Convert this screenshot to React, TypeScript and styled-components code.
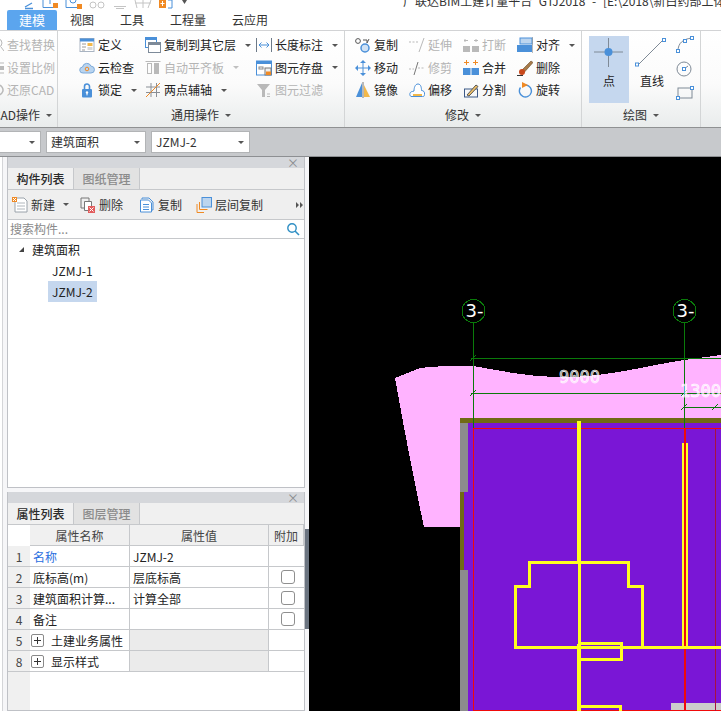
import React from "react";
import styled, { createGlobalStyle } from "styled-components";

const GlobalStyle = createGlobalStyle`
  html, body {
    margin: 0;
    padding: 0;
    background: #fff;
  }
  body {
    font-family: "Noto Sans CJK SC", "Noto Sans", sans-serif;
    font-size: 12px;
    color: #222;
  }
`;

const Page = styled.div`
  width: 721px;
  height: 711px;
  overflow: hidden;
  display: flex;
  flex-direction: column;
  line-height: 16px;
`;

/* ---------- title strip + tabs ---------- */

const TitleStrip = styled.div`
  height: 10px;
  flex: none;
  overflow: hidden;
  display: flex;
  justify-content: space-between;
  background: #fff;
`;

const TitleText = styled.div`
  margin-top: -7px;
  width: 318px;
  white-space: nowrap;
  overflow: hidden;
  color: #333;
  word-spacing: 4px;
`;

const TabBar = styled.div`
  height: 20px;
  flex: none;
  display: flex;
  padding-left: 7px;
  border-bottom: 1px solid #d2d3d5;
  background: #fff;
`;

const MenuTab = styled.div<{ $active?: boolean; $w: number }>`
  width: ${(p) => p.$w}px;
  height: 20px;
  line-height: 20px;
  text-align: center;
  font-size: ${(p) => (p.$active ? "13px" : "12px")};
  color: ${(p) => (p.$active ? "#fff" : "#333")};
  background: ${(p) => (p.$active ? "#5ba5ee" : "transparent")};
  border-radius: 2px 2px 0 0;
`;

/* ---------- ribbon ---------- */

const Ribbon = styled.div`
  height: 96px;
  flex: none;
  display: flex;
  background: linear-gradient(#ffffff 0%, #fbfbfb 55%, #e9ecec 100%);
  border-bottom: 1px solid #8f9192;
  overflow: hidden;
`;

const RibbonGroup = styled.div<{ $w: number; $bleed?: number; $pad?: number }>`
  width: ${(p) => p.$w}px;
  flex: none;
  display: flex;
  flex-direction: column;
  margin-left: ${(p) => p.$bleed ?? 0}px;
  padding-left: ${(p) => p.$pad ?? 0}px;
  padding-top: 3px;
  box-sizing: border-box;
  border-right: 1px solid #d3d5d6;
`;

const GroupBody = styled.div`
  height: 68px;
  display: flex;
`;

const ToolColumn = styled.div<{ $w: number }>`
  width: ${(p) => p.$w}px;
  flex: none;
  display: flex;
  flex-direction: column;
`;

const Tool = styled.div<{ $off?: boolean }>`
  height: 22.5px;
  display: flex;
  align-items: center;
  gap: 3px;
  white-space: nowrap;
  color: ${(p) => (p.$off ? "#b4b4b4" : "#222")};
`;

const Caret = styled.i<{ $off?: boolean; $gap?: number }>`
  display: inline-block;
  width: 0;
  height: 0;
  margin-left: ${(p) => p.$gap ?? 6}px;
  border-left: 3px solid transparent;
  border-right: 3px solid transparent;
  border-top: 3px solid ${(p) => (p.$off ? "#c0c0c0" : "#555")};
`;

const GroupLabel = styled.div<{ $shift?: number }>`
  height: 24px;
  margin-top: 1px;
  margin-left: ${(p) => -(p.$shift ?? 0)}px;
  display: flex;
  align-items: center;
  justify-content: center;
  color: #333;
`;

const DrawTile = styled.div<{ $on?: boolean }>`
  width: 40px;
  height: 67px;
  margin-top: 2px;
  margin-left: ${(p) => (p.$on ? 0 : 3)}px;
  display: flex;
  flex-direction: column;
  align-items: center;
  background: ${(p) => (p.$on ? "#c5d7ee" : "transparent")};
`;

const TileLabel = styled.span`
  margin-top: 1px;
`;

const ShapeColumn = styled.div`
  width: 20px;
  margin-left: 3px;
  display: flex;
  flex-direction: column;
  gap: 6px;
  padding-top: 2px;
`;

/* ---------- selector bar ---------- */

const SelectorBar = styled.div`
  height: 25px;
  flex: none;
  display: flex;
  gap: 5px;
  padding-top: 3px;
  margin-left: -1px;
  background: #c7c9cc;
  border-bottom: 1px solid #8d8f92;
`;

const Select = styled.div<{ $w: number }>`
  width: ${(p) => p.$w}px;
  height: 22px;
  box-sizing: border-box;
  padding: 0 5px 0 4px;
  display: flex;
  align-items: center;
  justify-content: space-between;
  background: #fff;
  border: 1px solid #b2b4b6;
  color: #333;
`;

/* ---------- work area ---------- */

const WorkArea = styled.div`
  flex: 1;
  min-height: 0;
  display: flex;
`;

const Dock = styled.div`
  width: 307px;
  flex: none;
  box-sizing: border-box;
  margin-left: 2px;
  padding-left: 4px;
  border-left: 1px solid #d4d5d8;
  display: flex;
  flex-direction: column;
  gap: 4px;
  background: #f6f6f8;
  position: relative;
`;

const Panel = styled.div<{ $h?: number }>`
  width: 298px;
  box-sizing: border-box;
  border: 1px solid #bfc1c6;
  border-top: none;
  background: #fff;
  display: flex;
  flex-direction: column;
  ${(p) => (p.$h ? `height: ${p.$h}px; flex: none;` : "flex: 1; min-height: 0;")}
`;

const PanelHead = styled.div`
  height: 11px;
  flex: none;
  display: flex;
  justify-content: flex-end;
  align-items: center;
  padding-right: 5px;
  background: #d5d7db;
  color: #8a8c90;
`;

const PanelTabs = styled.div`
  height: 21px;
  flex: none;
  display: flex;
  background: #f0f0f0;
  border-bottom: 1px solid #c6c8cb;
`;

const PanelTab = styled.div<{ $on?: boolean }>`
  width: 65px;
  text-align: center;
  line-height: 22px;
  font-weight: 500;
  border-right: 1px solid #c6c8cb;
  color: ${(p) => (p.$on ? "#2a2a2a" : "#8b8b8b")};
  background: ${(p) => (p.$on ? "#f0f0f0" : "#e2e2e2")};
`;

const ListTools = styled.div`
  height: 29px;
  flex: none;
  display: flex;
  align-items: center;
  padding-left: 4px;
  background: #efefef;
  border-bottom: 1px solid #c6c8cb;
  color: #333;
  white-space: nowrap;
`;

const ListTool = styled.div<{ $w: number }>`
  width: ${(p) => p.$w}px;
  flex: none;
  display: flex;
  align-items: center;
  gap: 3px;
`;

const MoreArrows = styled.svg`
  margin-left: 33px;
  flex: none;
`;

const SearchRow = styled.div`
  height: 18px;
  flex: none;
  display: flex;
  align-items: center;
  justify-content: space-between;
  padding: 0 4px 0 2px;
  border-bottom: 1px solid #c6c8cb;
  color: #8a8a8a;
`;

const Tree = styled.div`
  flex: 1;
  display: flex;
  flex-direction: column;
  color: #222;
`;

const TreeRow = styled.div<{ $depth: number }>`
  height: 21px;
  display: flex;
  align-items: center;
  padding-left: ${(p) => (p.$depth ? 40 : 11)}px;
  gap: 8px;
`;

const TreeLabel = styled.span<{ $on?: boolean; $flush?: boolean }>`
  padding: ${(p) => (p.$flush ? "0" : "0 4px")};
  line-height: 21px;
  background: ${(p) => (p.$on ? "#c5d7ee" : "transparent")};
`;

const Twist = styled.i`
  width: 0;
  height: 0;
  border-bottom: 5px solid #444;
  border-left: 5px solid transparent;
`;

/* ---------- property grid ---------- */

const PropGrid = styled.div`
  flex: 1;
  display: grid;
  grid-template-columns: 22px 100px 139px 35px;
  grid-auto-rows: 21px;
  background: linear-gradient(90deg, #f0f0f0 22px, #fff 22px);
  align-content: start;
`;

const Cell = styled.div<{ $kind?: "head" | "num" | "gray"; $color?: string }>`
  display: flex;
  align-items: center;
  box-sizing: border-box;
  padding: 1px 0 0 3px;
  overflow: hidden;
  white-space: nowrap;
  border-bottom: 1px solid #c6c8cb;
  border-right: 1px solid #c6c8cb;
  color: ${(p) => p.$color ?? "#222"};
  background: ${(p) =>
    p.$kind === "head" || p.$kind === "num" ? "#f0f0f0" : p.$kind === "gray" ? "#ebebeb" : "#fff"};
  ${(p) => (p.$kind === "head" ? "justify-content: center; padding: 1px 0 0; color: #444;" : "")}
  ${(p) => (p.$kind === "num" ? "justify-content: center; padding: 1px 0 0; color: #444; border-right: none;" : "")}
`;

const CornerCell = styled.div`
  background: #fff;
`;

const CheckCell = styled(Cell)`
  justify-content: center;
  padding: 0 0 0 2px;
  border-right: none;
`;

const CheckBox = styled.i`
  width: 14px;
  height: 14px;
  box-sizing: border-box;
  border: 1px solid #8f8f8f;
  border-radius: 3px;
  background: #fff;
`;

const PlusBox = styled.i`
  width: 13px;
  height: 13px;
  margin: 0 7px 0 -2px;
  box-sizing: border-box;
  border: 1px solid #8a8a8a;
  border-radius: 2px;
  background: linear-gradient(#333, #333) center / 7px 1px no-repeat,
    linear-gradient(#333, #333) center / 1px 7px no-repeat, #fff;
`;

const SideGrip = styled.div`
  position: absolute;
  right: 0;
  top: 372px;
  width: 4px;
  height: 100px;
  background: #6b7480;
`;

/* ---------- canvas ---------- */

const Canvas = styled.div`
  flex: 1;
  background: #000;
  overflow: hidden;
`;

const DimText = styled.text`
  font-family: "DejaVu Sans Mono", monospace;
  font-size: 17px;
  fill: #fff;
  fill-opacity: 0.55;
  stroke: #fff;
  stroke-width: 0.6;
`;

const BubbleText = styled.text`
  font-family: "DejaVu Sans", sans-serif;
  font-size: 18px;
  fill: #fff;
`;

/* ---------- icons ---------- */

const blue = "#4a90d9";
const orange = "#f08a24";
const grey = "#b9b9b9";

const IconSvg = styled.svg`
  flex: none;
`;

const icons: Record<string, React.ReactNode> = {
  find: <><circle cx="10" cy="6" r="4" stroke={grey} /><path d="M13 10l3 4M2 4h4M2 8h4M2 12h8" stroke={grey} /></>,
  scale: <><path d="M8 3h8M8 13h8M8 3v10" stroke={grey} /><path d="M10 6h6v4h-6z" fill={grey} /></>,
  restore: <><path d="M10 3a5 5 0 1 1-3 9" stroke={grey} strokeWidth="1.5" /><path d="M8 9v4h4" stroke={grey} /></>,
  define: <><rect x="1" y="1.5" width="14" height="13" fill="#fff" stroke="#a9b4c2" /><rect x="1" y="1.5" width="14" height="3" fill={blue} /><path d="M3 7h4M3 10h4M3 13h3" stroke="#9a9a9a" /><rect x="8.5" y="6" width="5" height="3" fill="#f2b84a" /><rect x="8.5" y="10" width="5" height="3" fill="#d8d8d8" /></>,
  cloud: <><path d="M4 13a3 3 0 0 1-.5-6 4.5 4.5 0 0 1 8.6-.8A3.4 3.4 0 0 1 12 13z" fill="#b9d4ef" stroke="#7aa8d8" /><circle cx="8" cy="9" r="1.8" stroke={orange} /></>,
  lock: <><path d="M5.5 7V4.5a2.5 2.5 0 0 1 5 0V7" stroke={blue} strokeWidth="1.6" /><rect x="3" y="7" width="10" height="8.5" rx="1" fill={blue} /><circle cx="8" cy="10.5" r="1.2" fill="#fff" /><path d="M8 11v2.4" stroke="#fff" /></>,
  copyLayer: <><rect x="0.5" y="0.5" width="11" height="10" fill="#fff" stroke={blue} /><rect x="0.5" y="0.5" width="11" height="2.5" fill={blue} /><rect x="3.5" y="5.5" width="12" height="10" fill="#fff" stroke="#7d8a99" /><rect x="3.5" y="5.5" width="12" height="2.5" fill="#7d8a99" /></>,
  autoFlat: <><path d="M.5 1.5h15" stroke={grey} /><rect x="2.5" y="3.5" width="4" height="10" stroke={grey} /><rect x="9" y="3" width="5" height="11" fill={grey} /></>,
  axis: <><path d="M1 5h14M1 10.5h14M6 1v14M11.5 1v14" stroke="#8a8f96" /><path d="M1 15L15 1" stroke={orange} /></>,
  length: <><path d="M.5 1v14M15.5 1v14" stroke="#6d7a88" /><path d="M3 8h10" stroke={blue} /><path d="M5.5 5.5L3 8l2.5 2.5M10.5 5.5L13 8l-2.5 2.5" stroke={blue} /></>,
  save: <><rect x="0.5" y="1" width="15" height="14" fill="#fff" stroke={blue} /><rect x="0.5" y="1" width="15" height="3" fill={blue} /><rect x="3" y="7" width="4" height="2" stroke="#888" /><rect x="9" y="8" width="6" height="7" fill="#eee" stroke="#777" /><rect x="10" y="11.5" width="5" height="3.5" fill={orange} /></>,
  filter: <><path d="M1 2h13L9 8v7H6V8z" fill={grey} /><path d="M11 12h3M11 14.5h3" stroke={grey} /></>,
  copy: <><circle cx="3" cy="4" r="2.4" stroke="#555" /><circle cx="10" cy="11" r="4" fill="#cfe1f4" stroke={blue} strokeWidth="1.5" /><path d="M8 3h4v3M14 2l-2 4" stroke="#555" /></>,
  move: <><path d="M8 1.5v13M1.5 8h13" stroke={blue} /><path d="M8 0l3 3H5zM8 16l-3-3h6zM0 8l3-3v6zM16 8l-3 3V5z" fill={blue} /></>,
  mirror: <><path d="M7 1L1 15h6z" fill={blue} /><path d="M8 0v16" stroke="#777" /><path d="M9 3l6 12H9z" fill="#f2b84a" /></>,
  extend: <><path d="M0 5h9" stroke={grey} strokeDasharray="2 1.5" /><path d="M15 1L10 15" stroke={grey} /></>,
  trim: <><path d="M0 9h5M9 8h7" stroke={grey} strokeDasharray="2 1.5" /><path d="M9 2L5 15" stroke="#777" /></>,
  offset: <><path d="M2 14.5c-2-1-1.5-5 1.5-5l1.5-.5c0-3 1-7 4-7s3.5 4 3.5 6.5c2 0 3.5 1.5 3 4s-1 2-2 2z" fill="#fff" stroke={blue} /><path d="M4 13h9" stroke="#f2b84a" strokeWidth="2" /></>,
  breakIt: <><path d="M2 2v3M13 2v3M5 3.5H1M15 3.5h-4" stroke={grey} /><rect x="0" y="9" width="7" height="6" fill={grey} /><rect x="9" y="9" width="7" height="6" fill={grey} /></>,
  merge: <><path d="M1 2.5h5M3.5 0v5M10 2.5h5M12.5 0v5" stroke={orange} /><rect x="0" y="8" width="7.5" height="7" fill={blue} /><rect x="8.5" y="8" width="7.5" height="7" fill={blue} /></>,
  split: <><rect x="1.5" y="7" width="13" height="8" stroke="#3d5a88" /><path d="M4 13l9-10 2 1.5L6 14z" fill="#f2c267" stroke="#555" /></>,
  align: <><rect x="3" y="1" width="12" height="6" fill="#bcd5ef" stroke={blue} /><rect x="0" y="8" width="15" height="7" fill={blue} /><path d="M16 0v16" stroke="#777" /></>,
  erase: <><path d="M5 10L14 1l2 1.5L7.5 12z" fill="#a87b4a" stroke="#6a4c28" strokeWidth=".6" /><circle cx="5" cy="12" r="3" fill="#c8481c" /><path d="M0 15.5h6" stroke="#333" /></>,
  rotate: <><path d="M9 3a6 6 0 1 1-5.5 2.5" stroke={blue} strokeWidth="1.4" /><path d="M5 0l6 3-6 3z" fill={orange} /></>,
  addNew: <><path d="M3 1h9l3 3v11H3z" fill="#fff" stroke="#9aa2aa" /><path d="M5 6h8M5 9h8M5 12h8" stroke="#b0b6bc" /><path d="M0 0h5v5H0z" fill={orange} /><path d="M1 1l3 3M4 1l-3 3" stroke="#fff" /></>,
  del: <><path d="M1 1h8v3M1 1v10h3" stroke="#777" /><path d="M4.5 4.5h7v9h-7z" fill="#fff" stroke="#777" /><rect x="8" y="9" width="7" height="7" fill="#e25c5c" /><path d="M9.5 10.5l4 4M13.5 10.5l-4 4" stroke="#fff" /></>,
  dup: <><path d="M3 2V1h7l4 4v8h-1" stroke={blue} /><path d="M1.5 3h8l3 3v9h-11z" fill="#fff" stroke={blue} /><path d="M4 7.5h6M4 10h6M4 12.5h6" stroke={blue} /></>,
  floorCopy: <><path d="M1 15.5V7M1 15.5h7" stroke={orange} /><path d="M3.5 12.5V5M3.5 12.5h8" stroke={orange} /><rect x="6" y="0.5" width="9.5" height="9.5" fill="#bcd5ef" stroke={blue} /></>,
};

const Icon = ({ name }: { name: string }) => (
  <IconSvg width={16} height={16} viewBox="0 0 16 16" fill="none">
    {icons[name]}
  </IconSvg>
);

const Handle = ({ x, y }: { x: number; y: number }) => (
  <rect x={x - 1.5} y={y - 1.5} width="3" height="3" fill="#fff" stroke="#4a90d9" />
);

/* ---------- data ---------- */

type T = { icon: string; label: string; off?: boolean; caret?: boolean };

const commonCols: { w: number; tools: T[] }[] = [
  { w: 66, tools: [
    { icon: "define", label: "定义" },
    { icon: "cloud", label: "云检查" },
    { icon: "lock", label: "锁定", caret: true },
  ] },
  { w: 111, tools: [
    { icon: "copyLayer", label: "复制到其它层", caret: true },
    { icon: "autoFlat", label: "自动平齐板", off: true, caret: true },
    { icon: "axis", label: "两点辅轴", caret: true },
  ] },
  { w: 89, tools: [
    { icon: "length", label: "长度标注", caret: true },
    { icon: "save", label: "图元存盘", caret: true },
    { icon: "filter", label: "图元过滤", off: true },
  ] },
];

const modifyCols: { w: number; tools: T[] }[] = [
  { w: 54, tools: [
    { icon: "copy", label: "复制" },
    { icon: "move", label: "移动" },
    { icon: "mirror", label: "镜像" },
  ] },
  { w: 54, tools: [
    { icon: "extend", label: "延伸", off: true },
    { icon: "trim", label: "修剪", off: true },
    { icon: "offset", label: "偏移" },
  ] },
  { w: 54, tools: [
    { icon: "breakIt", label: "打断", off: true },
    { icon: "merge", label: "合并" },
    { icon: "split", label: "分割" },
  ] },
  { w: 60, tools: [
    { icon: "align", label: "对齐", caret: true },
    { icon: "erase", label: "删除" },
    { icon: "rotate", label: "旋转" },
  ] },
];

const cadTools: T[] = [
  { icon: "find", label: "查找替换", off: true },
  { icon: "scale", label: "设置比例", off: true },
  { icon: "restore", label: "还原CAD", off: true },
];

const props = [
  { n: 1, name: "名称", value: "JZMJ-2", blue: true },
  { n: 2, name: "底标高(m)", value: "层底标高", check: true },
  { n: 3, name: "建筑面积计算...", value: "计算全部", check: true },
  { n: 4, name: "备注", value: "", check: true },
  { n: 5, name: "土建业务属性", value: "", group: true },
  { n: 8, name: "显示样式", value: "", group: true },
];

const ToolItem = ({ t }: { t: T }) => (
  <Tool $off={t.off}>
    <Icon name={t.icon} />
    {t.label}
    {t.caret && <Caret $off={t.off} />}
  </Tool>
);

// coordinates below are page pixels minus the canvas origin (309, 157)
const AxisBubble = ({ cx }: { cx: number }) => (
  <g>
    <circle cx={cx} cy={154} r={11.5} fill="#000" stroke="#0a7a0a" shapeRendering="crispEdges" />
    <BubbleText x={cx - 8} y={160}>3-</BubbleText>
  </g>
);

const Tick = ({ x, y }: { x: number; y: number }) => (
  <path d={`M${x - 3} ${y + 3}L${x + 3} ${y - 3}`} stroke="#0a7a0a" shapeRendering="crispEdges" />
);

const CadDrawing = () => (
  <svg width="412" height="554" viewBox="0 0 412 554" style={{ display: "block" }}>
    <path
      d="M86 221 L111 211 Q130 209 145 209 L164 209 C190 213 215 220 255 220 C300 220 340 208 375 203 L412 198 L412 270 L151 270 L151 370 L115 370 Q100 300 86 221 Z"
      fill="#ffb3ff"
      shapeRendering="crispEdges"
    />
    <rect x="151" y="261" width="261" height="293" fill="#7a16d6" />
    <rect x="151" y="261" width="261" height="5" fill="#706a14" />
    <rect x="151" y="266" width="8" height="69" fill="#8c8c8c" />
    <rect x="151" y="335" width="4" height="78" fill="#706a14" />
    <rect x="151" y="413" width="8" height="141" fill="#8c8c8c" />
    <rect x="362" y="546" width="50" height="8" fill="#cccccc" />

    <g shapeRendering="crispEdges">
      <path d="M164.5 166V271M375.5 166V271" stroke="#0a7a0a" />
      <path d="M162 201.5H412M162 236.5H412M375 250.5H412" stroke="#0a7a0a" />
      <path d="M164.5 271V554" stroke="#f00a0a" />
      <path d="M164 271.5H412" stroke="#f00a0a" />
      <path d="M164 553.5H412" stroke="#f00a0a" />
      <path d="M406.5 272V554" stroke="#a81040" />
      <path d="M270 264V405" stroke="#ffff20" strokeWidth="4" />
      <path d="M270 487V554" stroke="#ffff20" strokeWidth="4" />
      <path d="M374 286V490" stroke="#ffff20" strokeWidth="2" />
      <path d="M378 286V490" stroke="#ffff20" strokeWidth="2" />
      <path d="M376 271V554" stroke="#f00a0a" strokeWidth="2" />
      <path
        d="M270.5 405.5H220.5V429.5H206.5V490.5H412M270.5 405.5H319.5V429.5H333.5V490.5"
        stroke="#ffff20"
        strokeWidth="3"
        fill="none"
      />
      <path d="M270.5 405V488" stroke="#ffff20" strokeWidth="3" />
      <path d="M270 486.5H312.5V502H270" stroke="#ffff20" strokeWidth="3" fill="none" />
      <path d="M270 549.5H311V554" stroke="#ffff20" strokeWidth="3" fill="none" />
    </g>

    <Tick x={164} y={201} />
    <Tick x={164} y={236} />
    <Tick x={375} y={236} />
    <Tick x={375} y={250} />
    <Tick x={406} y={250} />

    <AxisBubble cx={164.5} />
    <AxisBubble cx={375.5} />

    <DimText x="250" y="226">9000</DimText>
    <DimText x="371" y="240">1300</DimText>
  </svg>
);

export default function App() {
  return (
    <Page>
      <GlobalStyle />
      <TitleStrip>
        <svg width="190" height="10" viewBox="0 0 190 10" fill="none">
          <path d="M25 7L32 3M25 8.5H33" stroke="#4a90d9" strokeWidth="1.3" />
          <path d="M43 0V7.5H54M50 0v4" stroke="#4a90d9" />
          <rect x="53" y="3" width="5" height="5" fill="#f08a24" />
          <path d="M66 0V7.5H78M70 0a3 3 0 0 0 6 0" stroke="#4a90d9" />
          <rect x="77" y="4" width="5" height="5" fill="#f08a24" />
          <circle cx="93" cy="5" r="3" stroke="#c4c4c4" />
          <circle cx="101" cy="5" r="3" stroke="#c4c4c4" />
          <path d="M114 6.5H126M116 8.5H124" stroke="#c4c4c4" />
          <path d="M135 0L137 8M143 0V8M151 0L148 8M135 3H151" stroke="#c4c4c4" />
          <rect x="159" y="0" width="7" height="8" fill="#f08a24" />
          <path d="M162.5 1v5M160.5 3.5h4" stroke="#fff" />
          <path d="M168 0H172V8H168" stroke="#4a90d9" />
          <path d="M182 0H187L184.5 4Z" fill="#555" />
        </svg>
        <TitleText>广联达BIM土建计量平台 GTJ2018 - [E:\2018\新白药部上体</TitleText>
      </TitleStrip>

      <TabBar>
        <MenuTab $active $w={50}>建模</MenuTab>
        <MenuTab $w={50}>视图</MenuTab>
        <MenuTab $w={50}>工具</MenuTab>
        <MenuTab $w={62}>工程量</MenuTab>
        <MenuTab $w={62}>云应用</MenuTab>
      </TabBar>

      <Ribbon>
        <RibbonGroup $w={70} $bleed={-12}>
          <GroupBody>
            <ToolColumn $w={70}>
              {cadTools.map((t) => <ToolItem key={t.label} t={t} />)}
            </ToolColumn>
          </GroupBody>
          <GroupLabel>CAD操作<Caret /></GroupLabel>
        </RibbonGroup>

        <RibbonGroup $w={287} $pad={21}>
          <GroupBody>
            {commonCols.map((c) => (
              <ToolColumn key={c.w} $w={c.w}>
                {c.tools.map((t) => <ToolItem key={t.label} t={t} />)}
              </ToolColumn>
            ))}
          </GroupBody>
          <GroupLabel $shift={21}>通用操作<Caret /></GroupLabel>
        </RibbonGroup>

        <RibbonGroup $w={237} $pad={10}>
          <GroupBody>
            {modifyCols.map((c, i) => (
              <ToolColumn key={i} $w={c.w}>
                {c.tools.map((t) => <ToolItem key={t.label} t={t} />)}
              </ToolColumn>
            ))}
          </GroupBody>
          <GroupLabel $shift={10}>修改<Caret /></GroupLabel>
        </RibbonGroup>

        <RibbonGroup $w={119} $pad={7}>
          <GroupBody>
            <DrawTile $on>
              <svg width="40" height="36" viewBox="0 0 40 36" fill="none">
                <path d="M5 16H34M19.5 2V31" stroke="#7f8a96" />
                <circle cx="19.5" cy="16" r="4" fill="#4a90d9" />
              </svg>
              <TileLabel>点</TileLabel>
            </DrawTile>
            <DrawTile>
              <svg width="40" height="36" viewBox="0 0 40 36" fill="none">
                <path d="M6 29L31 4" stroke="#7f8a96" />
                <rect x="3.5" y="27" width="3" height="3" fill="#fff" stroke="#4a90d9" />
                <rect x="30.5" y="2.5" width="3" height="3" fill="#fff" stroke="#4a90d9" />
              </svg>
              <TileLabel>直线</TileLabel>
            </DrawTile>
            <ShapeColumn>
              <svg width="20" height="18" viewBox="0 0 20 18" fill="none">
                <path d="M3 15C3 7 8 3 17 2" stroke="#7f8a96" />
                <Handle x={3} y={15} /><Handle x={10} y={5} /><Handle x={17} y={2} />
              </svg>
              <svg width="20" height="18" viewBox="0 0 20 18" fill="none">
                <circle cx="9" cy="9" r="7" stroke="#7f8a96" />
                <path d="M9 9L13 6" stroke="#7f8a96" />
                <Handle x={9} y={9} />
              </svg>
              <svg width="20" height="18" viewBox="0 0 20 18" fill="none">
                <rect x="3" y="4" width="14" height="10" stroke="#7f8a96" />
                <Handle x={3} y={14} /><Handle x={17} y={4} />
              </svg>
            </ShapeColumn>
          </GroupBody>
          <GroupLabel $shift={7}>绘图<Caret /></GroupLabel>
        </RibbonGroup>
      </Ribbon>

      <SelectorBar>
        <Select $w={42}><span /><Caret $gap={0} /></Select>
        <Select $w={100}>建筑面积<Caret $gap={0} /></Select>
        <Select $w={99}>JZMJ-2<Caret $gap={0} /></Select>
      </SelectorBar>

      <WorkArea>
        <Dock>
          <Panel>
            <PanelHead>×</PanelHead>
            <PanelTabs>
              <PanelTab $on>构件列表</PanelTab>
              <PanelTab>图纸管理</PanelTab>
            </PanelTabs>
            <ListTools>
              <ListTool $w={68}><Icon name="addNew" />新建<Caret $gap={5} /></ListTool>
              <ListTool $w={59}><Icon name="del" />删除</ListTool>
              <ListTool $w={57}><Icon name="dup" />复制</ListTool>
              <ListTool $w={67}><Icon name="floorCopy" />层间复制</ListTool>
              <MoreArrows width="7" height="6" viewBox="0 0 7 6">
                <path d="M0 0l3 3-3 3zM4 0l3 3-3 3z" fill="#555" />
              </MoreArrows>
            </ListTools>
            <SearchRow>
              搜索构件...
              <svg width="14" height="14" viewBox="0 0 14 14" fill="none">
                <circle cx="6" cy="6" r="4.2" stroke="#2f8fc4" strokeWidth="1.4" />
                <path d="M9 9L13 13" stroke="#2f8fc4" strokeWidth="1.6" />
              </svg>
            </SearchRow>
            <Tree>
              <TreeRow $depth={0}><Twist /><TreeLabel $flush>建筑面积</TreeLabel></TreeRow>
              <TreeRow $depth={1}><TreeLabel>JZMJ-1</TreeLabel></TreeRow>
              <TreeRow $depth={1}><TreeLabel $on>JZMJ-2</TreeLabel></TreeRow>
            </Tree>
          </Panel>

          <Panel $h={219}>
            <PanelHead>×</PanelHead>
            <PanelTabs>
              <PanelTab $on>属性列表</PanelTab>
              <PanelTab>图层管理</PanelTab>
            </PanelTabs>
            <PropGrid>
              <CornerCell />
              <Cell $kind="head">属性名称</Cell>
              <Cell $kind="head">属性值</Cell>
              <Cell $kind="head">附加</Cell>
              {props.map((r) => (
                <React.Fragment key={r.n}>
                  <Cell $kind="num">{r.n}</Cell>
                  <Cell $color={r.blue ? "#2a6fe0" : undefined}>
                    {r.group && <PlusBox />}
                    {r.name}
                  </Cell>
                  <Cell $kind={r.group ? "gray" : undefined}>{r.value}</Cell>
                  <CheckCell>{r.check && <CheckBox />}</CheckCell>
                </React.Fragment>
              ))}
            </PropGrid>
          </Panel>
          <SideGrip />
        </Dock>

        <Canvas>
          <CadDrawing />
        </Canvas>
      </WorkArea>
    </Page>
  );
}
